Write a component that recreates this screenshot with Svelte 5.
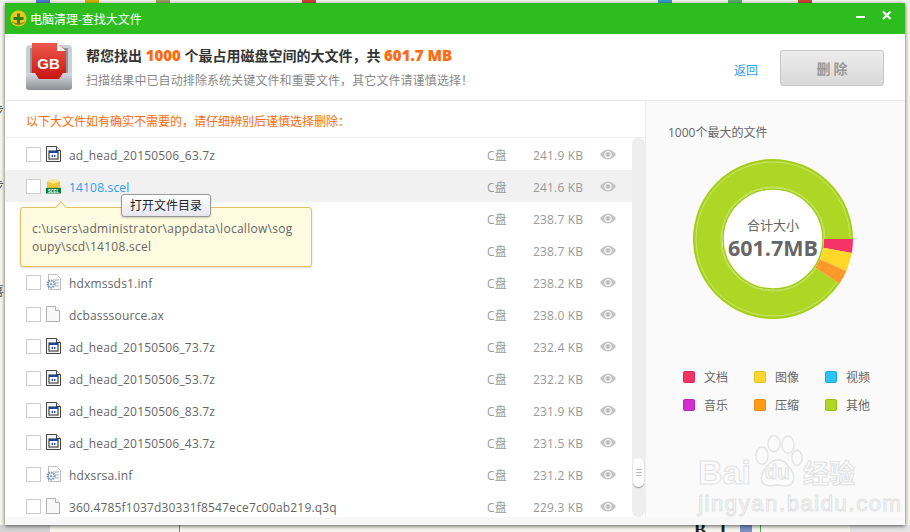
<script lang="ts">
	type FileRow = { name: string; size: string; kind: 'exe' | 'scel' | 'inf' | 'blank' };

	// rows 3 and 4 sit under the path tooltip, only their sizes show
	const files: FileRow[] = [
		{ name: 'ad_head_20150506_63.7z', size: '241.9 KB', kind: 'exe' },
		{ name: '14108.scel', size: '241.6 KB', kind: 'scel' },
		{ name: '', size: '238.7 KB', kind: 'inf' },
		{ name: '', size: '238.7 KB', kind: 'inf' },
		{ name: 'hdxmssds1.inf', size: '238.2 KB', kind: 'inf' },
		{ name: 'dcbasssource.ax', size: '238.0 KB', kind: 'blank' },
		{ name: 'ad_head_20150506_73.7z', size: '232.4 KB', kind: 'exe' },
		{ name: 'ad_head_20150506_53.7z', size: '232.2 KB', kind: 'exe' },
		{ name: 'ad_head_20150506_83.7z', size: '231.9 KB', kind: 'exe' },
		{ name: 'ad_head_20150506_43.7z', size: '231.5 KB', kind: 'exe' },
		{ name: 'hdxsrsa.inf', size: '231.2 KB', kind: 'inf' },
		{ name: '360.4785f1037d30331f8547ece7c00ab219.q3q', size: '229.3 KB', kind: 'blank' }
	];

	const legend = [
		{ label: '文档', color: '#f53366', edge: '#d92a58' },
		{ label: '图像', color: '#ffd829', edge: '#e6c020' },
		{ label: '视频', color: '#2cc3f8', edge: '#1ea8d8' },
		{ label: '音乐', color: '#d62ed2', edge: '#b824b5' },
		{ label: '压缩', color: '#ff9a14', edge: '#e5880c' },
		{ label: '其他', color: '#aed625', edge: '#94bb14' }
	];

	const cx = 90;
	const cy = 90;

	function slice(from: number, to: number, r1: number, r2: number): string {
		const rad = (a: number) => (a * Math.PI) / 180;
		const p = (r: number, a: number) =>
			`${(cx + r * Math.cos(rad(a))).toFixed(2)} ${(cy + r * Math.sin(rad(a))).toFixed(2)}`;
		const large = to - from > 180 ? 1 : 0;
		return `M${p(r2, from)} A${r2} ${r2} 0 ${large} 1 ${p(r2, to)} L${p(r1, to)} A${r1} ${r1} 0 ${large} 0 ${p(r1, from)} Z`;
	}
</script>

<div class="backdrop">
	<span class="bd-left" style="top: 100px">步</span>
	<span class="bd-left" style="top: 175px">步</span>
	<span class="bd-left" style="top: 280px">喜</span>
	<i class="bd-chip" style="left: 36px; background: #4a7fd0"></i>
	<i class="bd-chip" style="left: 85px; background: #d8b400"></i>
	<i class="bd-chip" style="left: 156px; background: #9aa060"></i>
	<i class="bd-chip" style="left: 302px; background: #c9453a"></i>
	<i class="bd-chip" style="left: 658px; background: #3a9ad0"></i>
	<i class="bd-chip" style="left: 728px; background: #58b070"></i>
	<i class="bd-chip" style="left: 798px; background: #c9453a"></i>
	<span class="bd-bottom">B&nbsp;&nbsp;&nbsp;I</span>
	<i class="bd-line a"></i>
	<i class="bd-line b"></i>
	<i class="bd-film"></i>
	<i class="bd-grey"></i>
	<i class="bd-grey r"></i>
</div>

<div class="window">
	<header class="titlebar">
		<svg class="logo" width="17" height="17" viewBox="0 0 17 17">
			<circle cx="8.5" cy="8.5" r="8" fill="#e9c81e" />
			<path d="M1.5 11a8 8 0 0 0 14 0a9 6 0 0 1-14 0z" fill="#8f8a1c" />
			<path d="M7 3.500h3v3.500h3.500v3H10v3.500H7V10H3.500V7H7z" fill="#2f7d18" />
		</svg>
		<span class="title">电脑清理-查找大文件</span>
		<span class="spacer"></span>
		<svg class="winbtn" width="54" height="12" viewBox="0 0 54 12">
			<rect x="13" y="6" width="9" height="2" fill="#fff" />
			<path d="M40 1.500l7.500 7.500M47.500 1.500L40 9" stroke="#fff" stroke-width="2.200" fill="none" />
		</svg>
	</header>

	<section class="summary">
		<svg class="gb" width="48" height="50" viewBox="0 0 48 50">
			<defs>
				<linearGradient id="tray" x1="0" y1="0" x2="0" y2="1">
					<stop offset="0" stop-color="#d5dbe0" />
					<stop offset="1" stop-color="#8c9095" />
				</linearGradient>
				<linearGradient id="paper" x1="0" y1="0" x2="0" y2="1">
					<stop offset="0" stop-color="#ee5a50" />
					<stop offset="1" stop-color="#c8140f" />
				</linearGradient>
			</defs>
			<rect x="1" y="3" width="46" height="45" rx="4" fill="#c9d0d6" />
			<rect x="5" y="6" width="38" height="27" fill="#8e9499" />
			<path d="M7 1h25l9 7v29H7z" fill="url(#paper)" />
			<path d="M32 1l9 8h-9z" fill="#eef0f2" />
			<path d="M1 31h9l4 6h20l4-6h9v14a3 3 0 0 1-3 3H4a3 3 0 0 1-3-3z" fill="url(#tray)" />
			<text x="23.500" y="27" class="gb-text">GB</text>
		</svg>
		<div class="summary-text">
			<p class="headline">帮您找出 <b>1000</b> 个最占用磁盘空间的大文件，共 <b>601.7 MB</b></p>
			<p class="subline">扫描结果中已自动排除系统关键文件和重要文件，其它文件请谨慎选择！</p>
		</div>
		<span class="back">返回</span>
		<button class="delete">删 除</button>
	</section>

	<div class="body">
		<div class="left">
			<p class="notice">以下大文件如有确实不需要的，请仔细辨别后谨慎选择删除：</p>
			<div class="list-wrap">
				<ul class="list">
					{#each files as file, i}
						<li class="row" class:active={i === 1}>
							<span class="check"></span>
							<span class="file-icon">
								{#if file.kind === 'exe'}
									<svg width="15" height="16" viewBox="0 0 15 16">
										<path d="M.5.500h10l4 4v11H.500z" fill="#f4f4f4" stroke="#444" />
										<path d="M10.500.500v4h4" fill="#fff" stroke="#444" />
										<rect x="3" y="5" width="9" height="8" fill="#fff" stroke="#222" />
										<rect x="3" y="5" width="9" height="2" fill="#1d3fa8" />
										<path d="M5 10l2-1.500v3zM10 10l-2-1.500v3z" fill="#1d3fa8" />
									</svg>
								{:else if file.kind === 'scel'}
									<svg width="16" height="16" viewBox="0 0 16 16">
										<path d="M1 3l7-2.500L15 3v7H1z" fill="#f0c63a" />
										<path d="M1 3l7 2.500L15 3 8 .500z" fill="#fbe89a" />
										<rect y="10" width="16" height="6" fill="#0c7a3a" />
										<text x="8" y="15" class="scel-text">SCEL</text>
									</svg>
								{:else if file.kind === 'inf'}
									<svg width="15" height="16" viewBox="0 0 15 16">
										<path d="M2.500.500h8l4 4v11h-12z" fill="#fff" stroke="#bbb" />
										<path d="M7 6h6M9 9h4M9 12h4" stroke="#9fb3c8" />
										<circle cx="5" cy="10" r="3.500" fill="none" stroke="#6d8fb5" stroke-width="2" stroke-dasharray="1.500 .8" />
										<circle cx="5" cy="10" r="1.500" fill="#8fb0d2" />
									</svg>
								{:else}
									<svg width="14" height="16" viewBox="0 0 14 16">
										<path d="M.5.500h9l4 4v11H.500z" fill="#f8f8f8" stroke="#b0b0b0" />
										<path d="M9.500.500v4h4" fill="#fff" stroke="#b0b0b0" />
									</svg>
								{/if}
							</span>
							<span class="name">{file.name}</span>
							<span class="disk">C盘</span>
							<span class="size">{file.size}</span>
							<svg class="eye" width="16" height="11" viewBox="0 0 16 11">
								<path d="M0 5.500C2.500 2 5 .500 8 .500s5.500 1.500 8 5c-2.500 3.500-5 5-8 5s-5.500-1.500-8-5z" fill="#c4c4c4" />
								<circle cx="8" cy="5.500" r="3.600" fill="#fff" />
								<circle cx="8" cy="5.500" r="2.500" fill="#c4c4c4" />
							</svg>
						</li>
					{/each}
				</ul>
				<div class="scrollbar">
					<div class="thumb"><i></i><i></i><i></i></div>
				</div>
			</div>
			<div class="path-tip">
				<span class="arrow"></span>
				c:\users\administrator\appdata\locallow\sog<br />oupy\scd\14108.scel
			</div>
			<div class="open-tip">打开文件目录</div>
		</div>

		<aside class="right">
			<h3 class="chart-title">1000个最大的文件</h3>
			<div class="donut">
				<svg width="180" height="180" viewBox="0 0 180 180">
					<path d={slice(34, 360, 51, 80)} fill="#aed625" />
					<path d={slice(0, 10, 51, 80)} fill="#f53366" />
					<path d={slice(10, 23.5, 51, 80)} fill="#ffd829" />
					<path d={slice(23.5, 34, 51, 80)} fill="#ff9a2a" />
					<circle {cx} {cy} r="79" fill="none" stroke="#9fcc14" stroke-width="1" stroke-dasharray="449 47" stroke-dashoffset="-47" />
					<circle {cx} {cy} r="77" fill="none" stroke="#cbe36f" stroke-width="1" stroke-dasharray="438 46" stroke-dashoffset="-46" />
					<circle {cx} {cy} r="52" fill="none" stroke="#cbe36f" stroke-width="1" stroke-dasharray="296 31" stroke-dashoffset="-31" />
					<circle {cx} {cy} r="50" fill="#fff" stroke="#9fcc14" stroke-width="1.500" />
				</svg>
				<div class="donut-label">
					<span class="sum">合计大小</span>
					<strong>601.7MB</strong>
				</div>
			</div>
			<ul class="legend">
				{#each legend as item}
					<li>
						<i style="background: {item.color}; border-color: {item.edge}"></i>
						<span>{item.label}</span>
					</li>
				{/each}
			</ul>
		</aside>
	</div>
	<div class="foot"></div>

	<div class="watermark">
		<svg class="paw" width="50" height="52" viewBox="0 0 50 48" preserveAspectRatio="none">
			<g fill="#fbfbfb" stroke="#e4e4e4" stroke-width="1.500">
				<ellipse cx="9" cy="19" rx="6" ry="8" />
				<ellipse cx="21" cy="8" rx="6" ry="7.500" />
				<ellipse cx="35" cy="9" rx="6" ry="8" />
				<ellipse cx="44" cy="21" rx="5" ry="7" />
				<path d="M25 23c8 0 18 12 15 20-2 5-9 4-15 3-7 1-14 2-16-3-3-8 8-20 16-20z" />
			</g>
		</svg>
		<span class="wm-bai">Bai</span>
		<span class="wm-du">du</span>
		<span class="wm-jy">经验</span>
		<span class="wm-url">jingyan.baidu.com</span>
	</div>
</div>

<style>
	:global(body) {
		background: #f6f6ee;
		font-family: 'Open Sans', 'Noto Sans CJK SC', sans-serif;
		overflow: hidden;
	}

	* {
		box-sizing: border-box;
	}

	p,
	h3,
	ul {
		margin: 0;
		padding: 0;
		font-weight: normal;
	}

	ul {
		list-style: none;
	}

	.backdrop {
		position: absolute;
		inset: 0;
		overflow: hidden;
	}

	.bd-left {
		position: absolute;
		left: -9px;
		font-size: 13px;
		color: #555;
	}

	.bd-chip {
		position: absolute;
		top: 0;
		width: 14px;
		height: 3px;
	}

	.bd-bottom {
		position: absolute;
		left: 694px;
		top: 520px;
		font: bold 18px 'Liberation Serif', serif;
		color: #222;
	}

	.bd-line {
		position: absolute;
		top: 525px;
		width: 1px;
		height: 7px;
		background: #4aa84a;
	}

	.bd-line.a {
		left: 179px;
	}

	.bd-line.b {
		left: 760px;
	}

	.bd-film {
		position: absolute;
		left: 740px;
		top: 525px;
		width: 12px;
		height: 7px;
		background: #7a8fc4;
	}

	.bd-grey {
		position: absolute;
		left: 0;
		top: 525px;
		width: 50px;
		height: 7px;
		background: #d4d4d4;
	}

	.bd-grey.r {
		left: 850px;
		width: 60px;
		background: #e4e4e4;
	}

	.window {
		position: absolute;
		left: 5px;
		top: 3px;
		width: 900px;
		height: 522px;
		display: flex;
		flex-direction: column;
		background: #fff;
		box-shadow: 0 1px 4px rgba(0, 0, 0, 0.65);
	}

	.titlebar {
		height: 31px;
		flex: none;
		display: flex;
		align-items: center;
		padding: 0 8px 0 5px;
		background: #2dbd1e;
		color: #fff;
	}

	.logo {
		margin-right: 3px;
	}

	.title {
		font-size: 12px;
	}

	.spacer {
		flex: 1;
	}

	.winbtn {
		margin-bottom: 6px;
	}

	.summary {
		height: 67px;
		flex: none;
		display: flex;
		align-items: center;
		padding: 0 21px 0 20px;
		border-bottom: 1px solid #e8e8e8;
	}

	.gb-text {
		font: bold 15px 'Liberation Sans', sans-serif;
		fill: #fff;
		text-anchor: middle;
	}

	.scel-text {
		font: bold 5px 'Liberation Mono', monospace;
		fill: #fff;
		text-anchor: middle;
	}

	.summary-text {
		margin-left: 13px;
		flex: 1;
	}

	.headline {
		font-size: 14px;
		font-weight: bold;
		line-height: 20px;
		color: #333;
	}

	.headline b {
		color: #ff6a0c;
		font-size: 15px;
	}

	.subline {
		margin-top: 7px;
		font-size: 12px;
		line-height: 16px;
		letter-spacing: 0.1px;
		color: #888;
	}

	.back {
		font-size: 12px;
		color: #2a9df4;
		margin-right: 22px;
		margin-top: 5px;
	}

	.delete {
		width: 104px;
		height: 36px;
		margin-top: 1px;
		padding: 0;
		border: 1px solid #c6c6c6;
		border-radius: 3px;
		background: linear-gradient(#ececec, #d9d9d9);
		color: #999;
		font: bold 14px 'Noto Sans CJK SC', sans-serif;
	}

	.body {
		flex: 1;
		min-height: 0;
		display: flex;
	}

	.left {
		position: relative;
		width: 640px;
		display: flex;
		flex-direction: column;
	}

	.notice {
		height: 37px;
		flex: none;
		padding-left: 21px;
		font-size: 12px;
		line-height: 42px;
		color: #ff6a0c;
		border-bottom: 1px solid #eee;
	}

	.list-wrap {
		flex: 1;
		display: flex;
		min-height: 0;
	}

	.list {
		width: 627px;
		overflow: hidden;
	}

	.row {
		height: 32px;
		display: grid;
		grid-template-columns: 15px 15px 1fr 41px 62px 16px;
		column-gap: 5px;
		align-items: center;
		padding: 0 16px 0 21px;
		font-size: 12px;
		color: #666;
	}

	.row.active {
		background: #f1f1f1;
	}

	.row.active .name {
		color: #2a9df4;
	}

	.check {
		width: 15px;
		height: 15px;
		border: 1px solid #ccc;
		background: #fff;
	}

	.file-icon {
		display: flex;
		height: 16px;
	}

	.name {
		margin-left: 3px;
		padding-top: 2px;
		letter-spacing: 0.18px;
		white-space: nowrap;
	}

	.disk,
	.size {
		padding-top: 2px;
		letter-spacing: 0.18px;
		color: #999;
	}

	.scrollbar {
		width: 13px;
		padding: 320px 1px 0;
		background: #eee;
		border-radius: 6px;
	}

	.thumb {
		height: 29px;
		display: flex;
		flex-direction: column;
		align-items: center;
		justify-content: center;
		gap: 2px;
		background: #fff;
		border-radius: 5px;
		box-shadow: 0 1px 1px #999;
	}

	.thumb i {
		width: 6px;
		height: 1px;
		background: #bbb;
	}

	.path-tip {
		position: absolute;
		left: 15px;
		top: 106px;
		width: 292px;
		height: 60px;
		padding: 12px 11px;
		font-size: 12px;
		line-height: 18px;
		letter-spacing: 0.27px;
		white-space: nowrap;
		color: #666;
		background: #fffbe0;
		border: 1px solid #e6c063;
		border-radius: 3px;
		box-shadow: 0 1px 2px rgba(0, 0, 0, 0.15);
	}

	.arrow {
		position: absolute;
		left: 36px;
		top: -5px;
		width: 8px;
		height: 8px;
		transform: rotate(45deg);
		background: #fffbe0;
		border-left: 1px solid #e6c063;
		border-top: 1px solid #e6c063;
	}

	.open-tip {
		position: absolute;
		left: 116px;
		top: 93px;
		width: 90px;
		height: 23px;
		text-align: center;
		font-size: 12px;
		line-height: 21px;
		color: #222;
		background: linear-gradient(#fff, #e6e6ef);
		border: 1px solid #999;
		border-radius: 3px;
		box-shadow: 0 1px 2px rgba(0, 0, 0, 0.2);
	}

	.right {
		flex: 1;
		display: flex;
		flex-direction: column;
		background: #fafafa;
		border-left: 1px solid #eee;
		padding-left: 22px;
	}

	.chart-title {
		margin-top: 22px;
		font-size: 12px;
		line-height: 20px;
		color: #666;
	}

	.donut {
		position: relative;
		width: 180px;
		height: 180px;
		margin: 6px 0 0 15px;
	}

	.donut-label {
		position: absolute;
		inset: 0;
		display: flex;
		flex-direction: column;
		align-items: center;
		justify-content: center;
		color: #666;
	}

	.sum {
		font-size: 13px;
		line-height: 18px;
	}

	.donut-label strong {
		font-size: 21.5px;
		line-height: 28px;
	}

	.legend {
		display: grid;
		grid-template-columns: repeat(3, 71px);
		row-gap: 10px;
		margin: 39px 0 0 15px;
		font-size: 12px;
		color: #666;
	}

	.legend li {
		display: flex;
		align-items: center;
		height: 18px;
	}

	.legend i {
		width: 12px;
		height: 12px;
		margin-right: 9px;
		border: 1px solid;
		border-radius: 2px;
	}

	.foot {
		height: 8px;
		flex: none;
		background: #f8f8f8;
	}

	.watermark {
		position: absolute;
		left: 693px;
		top: 430px;
		width: 200px;
		height: 90px;
		pointer-events: none;
	}

	.paw {
		position: absolute;
		left: 55px;
		top: 2px;
	}

	.watermark span {
		position: absolute;
		color: #fbfbfb;
		-webkit-text-stroke: 1px #e2e2e2;
		font-family: 'Liberation Sans', 'Noto Sans CJK SC', sans-serif;
		white-space: nowrap;
	}

	.wm-bai {
		left: 0;
		top: 20px;
		font-size: 34px;
		font-weight: bold;
	}

	.wm-du {
		left: 67px;
		top: 28px;
		font-size: 20px;
		font-weight: bold;
	}

	.wm-jy {
		left: 105px;
		top: 20px;
		font-size: 26px;
		font-weight: bold;
	}

	.wm-url {
		left: 0;
		top: 58px;
		font-size: 22px;
		letter-spacing: 1.6px;
	}
</style>
